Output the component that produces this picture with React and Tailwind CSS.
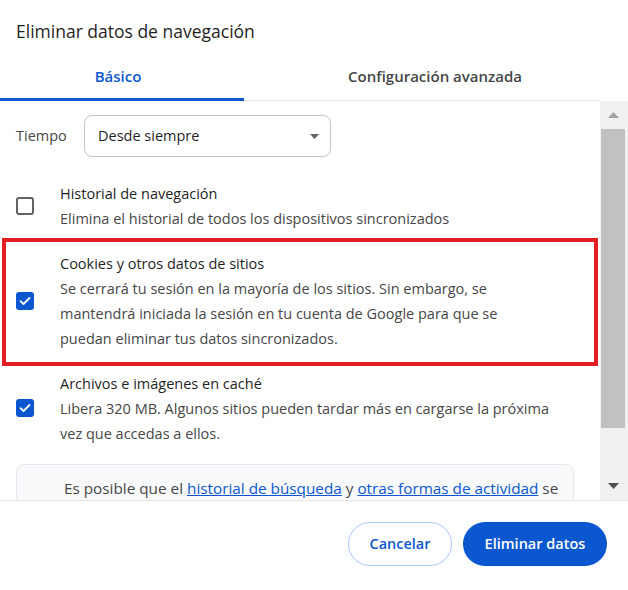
import React from "react";

const font = { fontFamily: '"Open Sans", "Noto Sans", sans-serif' };

function Check({ checked }) {
  if (checked) {
    return (
      <div className="w-[18px] h-[18px] rounded-[3px] bg-[#0b57d0] flex items-center justify-center shrink-0">
        <svg width="12" height="10" viewBox="0 0 12 10">
          <path d="M1.5 5.2 L4.5 8 L10.5 2" fill="none" stroke="white" strokeWidth="1.8" strokeLinecap="round" strokeLinejoin="round" />
        </svg>
      </div>
    );
  }
  return <div className="w-[18px] h-[18px] rounded-[3px] border-2 border-[#5f6368] shrink-0" />;
}

function Row({ checked, title, lines, pad = 16 }) {
  return (
    <div className="flex items-center">
      <div className={pad === 16 ? "w-[60px] pl-[16px] flex shrink-0" : "w-[54px] pl-[10px] flex shrink-0"}>
        <Check checked={checked} />
      </div>
      <div className="text-[14.5px] leading-[25px] whitespace-nowrap">
        <div className="text-[#1f1f1f]">{title}</div>
        {lines.map((l, i) => (
          <div key={i} className="text-[#474747]">{l}</div>
        ))}
      </div>
    </div>
  );
}

export default function App() {
  return (
    <div className="w-[628px] h-[590px] bg-white overflow-hidden flex flex-col" style={font}>
      <div className="h-[55px] pl-[16px] pt-[17px] text-[17.5px] leading-[28px] text-[#1f1f1f]">
        Eliminar datos de navegación
      </div>
      <div className="flex h-[46px] border-b border-[#e3e3e3] w-[600px]">
        <div className="w-[244px] flex items-center justify-center relative">
          <span className="text-[15px] font-semibold text-[#0b57d0] pb-[2px] pr-[8px]">Básico</span>
          <div className="absolute left-0 right-0 bottom-[-1px] h-[3px] bg-[#0b57d0]" />
        </div>
        <div className="flex-1 flex items-center justify-center pl-[26px]">
          <span className="text-[15px] font-semibold text-[#444746] pb-[2px]">Configuración avanzada</span>
        </div>
      </div>
      <div className="flex h-[399px]">
        <div className="w-[600px] overflow-hidden">
          <div className="mt-[14px] flex items-center h-[42px]">
            <div className="w-[84px] pl-[16px] text-[14.5px] text-[#474747]">Tiempo</div>
            <div className="w-[247px] h-[42px] rounded-[8px] border border-[#c4c7c5] flex items-center justify-between pl-[13px] pr-[11px]">
              <span className="text-[14.5px] text-[#1f1f1f]">Desde siempre</span>
              <svg width="9" height="5" viewBox="0 0 9 5"><path d="M0 0 L9 0 L4.5 5 Z" fill="#5f6368" /></svg>
            </div>
          </div>
          <div className="mt-[23.5px]">
            <Row title="Historial de navegación" lines={["Elimina el historial de todos los dispositivos sincronizados"]} />
          </div>
          <div className="mt-[7.5px] mx-[2px] border-4 border-[#e31e24] pt-[8.5px] pb-[11.5px]">
            <Row
              checked
              pad={10}
              title="Cookies y otros datos de sitios"
              lines={[
                "Se cerrará tu sesión en la mayoría de los sitios. Sin embargo, se",
                "mantendrá iniciada la sesión en tu cuenta de Google para que se",
                "puedan eliminar tus datos sincronizados.",
              ]}
            />
          </div>
          <div className="mt-[4.5px]">
            <Row
              checked
              title="Archivos e imágenes en caché"
              lines={[
                "Libera 320 MB. Algunos sitios pueden tardar más en cargarse la próxima",
                "vez que accedas a ellos.",
              ]}
            />
          </div>
          <div className="mt-[18.5px] ml-[16px] w-[558px] h-[60px] rounded-[8px] border border-[#e8eaed] bg-[#f8f9fa] pl-[47px] pt-[11px] text-[15.3px] leading-[25px] text-[#474747] whitespace-nowrap">
            Es posible que el <span className="text-[#0b57d0] underline">historial de búsqueda</span> y{" "}
            <span className="text-[#0b57d0] underline">otras formas de actividad</span> se
          </div>
        </div>
        <div className="w-[28px] bg-[#f1f1f1] flex flex-col">
          <div className="h-[28px] flex items-center justify-center pr-[2px]">
            <svg width="11" height="6" viewBox="0 0 11 6"><path d="M0 6 L11 6 L5.5 0 Z" fill="#a3a3a3" /></svg>
          </div>
          <div className="h-[299px] w-[24px] ml-[1px] bg-[#c1c1c1]" />
          <div className="flex-1 flex items-end justify-center pb-[11px] pr-[2px]">
            <svg width="11" height="6" viewBox="0 0 11 6"><path d="M0 0 L11 0 L5.5 6 Z" fill="#505050" /></svg>
          </div>
        </div>
      </div>
      <div className="border-t border-[#e3e3e3] flex-1 flex justify-end items-start pt-[21px] pr-[21px] gap-[11px]">
        <button className="w-[104px] h-[44px] rounded-full border border-[#a8c7fa] text-[14.5px] font-semibold text-[#0b57d0]" style={font}>
          Cancelar
        </button>
        <button className="w-[144px] h-[44px] rounded-full bg-[#0b57d0] text-[14.5px] font-semibold text-white" style={font}>
          Eliminar datos
        </button>
      </div>
    </div>
  );
}
